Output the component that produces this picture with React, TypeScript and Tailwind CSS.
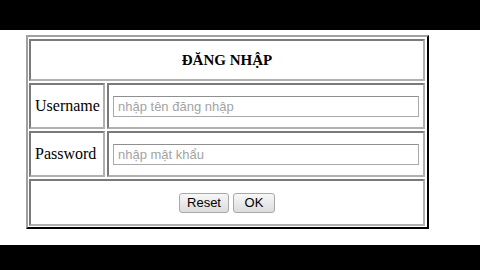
export default function App() {
  const cell =
    "border-2 border-t-[#7a7a7a] border-l-[#7a7a7a] border-b-[#b0b0b0] border-r-[#b0b0b0] bg-white";
  const input =
    "w-[306px] h-[21px] border border-[#a9a9a9] border-t-[#8f8f8f] px-[4px] text-[13px] text-black outline-none placeholder:text-[#a3a3a3] font-['Liberation_Sans',Arial,sans-serif]";
  const button =
    "h-[20px] rounded-[3px] border border-[#a8a8a8] bg-gradient-to-b from-[#f7f7f7] to-[#dcdcdc] text-[13px] leading-none text-black font-['Liberation_Sans',Arial,sans-serif]";

  return (
    <div className="w-[480px] h-[270px] flex flex-col bg-white font-['Liberation_Serif','Times_New_Roman',serif]">
      <div className="h-[30px] bg-black" />

      <div className="h-[215px] pl-[26px] pt-[5px]">
        <div className="w-[403px] flex flex-col gap-[2px] pt-[2px] pl-[1px] pr-[2px] pb-[1px] border-2 border-t-[#a0a0a0] border-l-[#a0a0a0] border-r-black border-b-black">
          {/* header */}
          <div className={`${cell} h-[42px] flex items-center justify-center`}>
            <span className="text-[15px] font-bold text-black">ĐĂNG NHẬP</span>
          </div>

          {/* username */}
          <div className="flex gap-[2px] h-[46px]">
            <div className={`${cell} w-[76px] flex items-center pl-[4px] text-[16px] text-black`}>
              Username
            </div>
            <div className={`${cell} flex-1 flex items-center pl-[4px]`}>
              <input className={input} placeholder="nhập tên đăng nhập" />
            </div>
          </div>

          {/* password */}
          <div className="flex gap-[2px] h-[46px]">
            <div className={`${cell} w-[76px] flex items-center pl-[4px] text-[16px] text-black`}>
              Password
            </div>
            <div className={`${cell} flex-1 flex items-center pl-[4px]`}>
              <input type="password" className={input} placeholder="nhập mật khẩu" />
            </div>
          </div>

          {/* actions */}
          <div className={`${cell} h-[47px] flex items-center justify-center gap-[4px]`}>
            <button className={`${button} w-[50px]`}>Reset</button>
            <button className={`${button} w-[42px]`}>OK</button>
          </div>
        </div>
      </div>

      <div className="h-[25px] bg-black" />
    </div>
  );
}
